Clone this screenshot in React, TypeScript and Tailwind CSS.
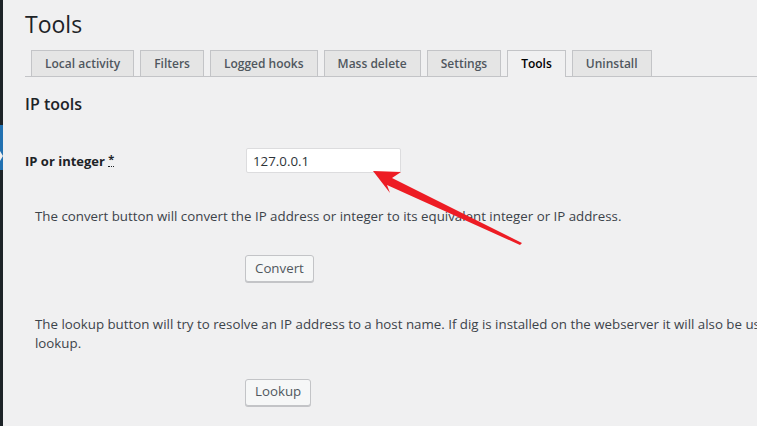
const tabs = ['Local activity', 'Filters', 'Logged hooks', 'Mass delete', 'Settings', 'Tools', 'Uninstall']

function Sidebar() {
  return (
    <div className="flex w-[3px] shrink-0 flex-col bg-[#1d2327]">
      <div className="h-[125px]" />
      <div className="relative h-[45px] bg-[#2271b1]">
        <div className="absolute left-0 top-[26px] h-0 w-0 border-y-[5px] border-l-[3px] border-y-transparent border-l-[#f0f0f1]" />
      </div>
    </div>
  )
}

function Arrow() {
  return (
    <svg className="pointer-events-none absolute left-0 top-0" width="757" height="426">
      <path
        d="M373 171 L401 172 L392 178 L522 243 L520 245 L387 185 L390 193 Z"
        fill="#ed1c24"
      />
    </svg>
  )
}

export default function App() {
  return (
    <div className="relative flex h-[426px] w-[757px] overflow-hidden bg-[#f0f0f1] font-['Open_Sans',sans-serif] text-[#3c434a]">
      <Sidebar />
      <div className="w-[900px] shrink-0 pl-[22px] pt-[9px]">
        <h1 className="text-[23px] font-normal leading-[30px] text-[#1d2327]">Tools</h1>

        <div className="mt-[11px] flex w-[1000px] gap-[6px] border-b border-[#c3c4c7] pl-[6px]">
          {tabs.map((tab) =>
            tab === 'Tools' ? (
              <div
                key={tab}
                className="-mb-px h-[27px] border border-b-0 border-[#c3c4c7] bg-[#f0f0f1] px-[13px] text-[12px] font-semibold leading-[26px] text-black"
              >
                {tab}
              </div>
            ) : (
              <div
                key={tab}
                className="h-[26px] border border-b-0 border-[#c3c4c7] bg-[#e5e5e5] px-[13px] text-[12px] font-semibold leading-[25px] text-[#50575e]"
              >
                {tab}
              </div>
            ),
          )}
        </div>

        <h2 className="mt-[15px] text-[16px] font-semibold leading-[24px] text-[#1d2327]">IP tools</h2>

        <div className="mt-[32px] flex items-center">
          <label className="w-[221px] pt-[3px] text-[13px] font-bold text-[#1d2327]">
            IP or integer{' '}
            <abbr className="relative -top-[3px] text-[11px] no-underline">
              <span className="border-b border-dotted border-[#1d2327]">*</span>
            </abbr>
          </label>
          <input
            type="text"
            defaultValue="127.0.0.1"
            className="h-[25px] w-[155px] rounded-[2px] border border-[#dcdcde] bg-white px-[6px] text-[13.3px] text-[#2c3338] outline-none"
          />
        </div>

        <p className="mt-[33px] pl-[10px] text-[13.3px] leading-[20px]">
          The convert button will convert the IP address or integer to its equivalent integer or IP address.
        </p>
        <div className="mt-[29px] pl-[220px]">
          <button className="h-[27px] rounded-[3px] border border-[#c3c4c7] bg-[#f6f7f7] px-[9px] text-[13.3px] text-[#50575e] shadow-[0_1px_0_#c3c4c7]">
            Convert
          </button>
        </div>

        <p className="mt-[33px] w-[850px] pl-[10px] text-[13.3px] leading-[19px]">
          The lookup button will try to resolve an IP address to a host name. If dig is installed on the webserver it will also be used for a reverse lookup.
        </p>
        <div className="mt-[25px] pl-[220px]">
          <button className="h-[27px] rounded-[3px] border border-[#c3c4c7] bg-[#f6f7f7] px-[9px] text-[13.3px] text-[#50575e] shadow-[0_1px_0_#c3c4c7]">
            Lookup
          </button>
        </div>
      </div>
      <Arrow />
    </div>
  )
}
